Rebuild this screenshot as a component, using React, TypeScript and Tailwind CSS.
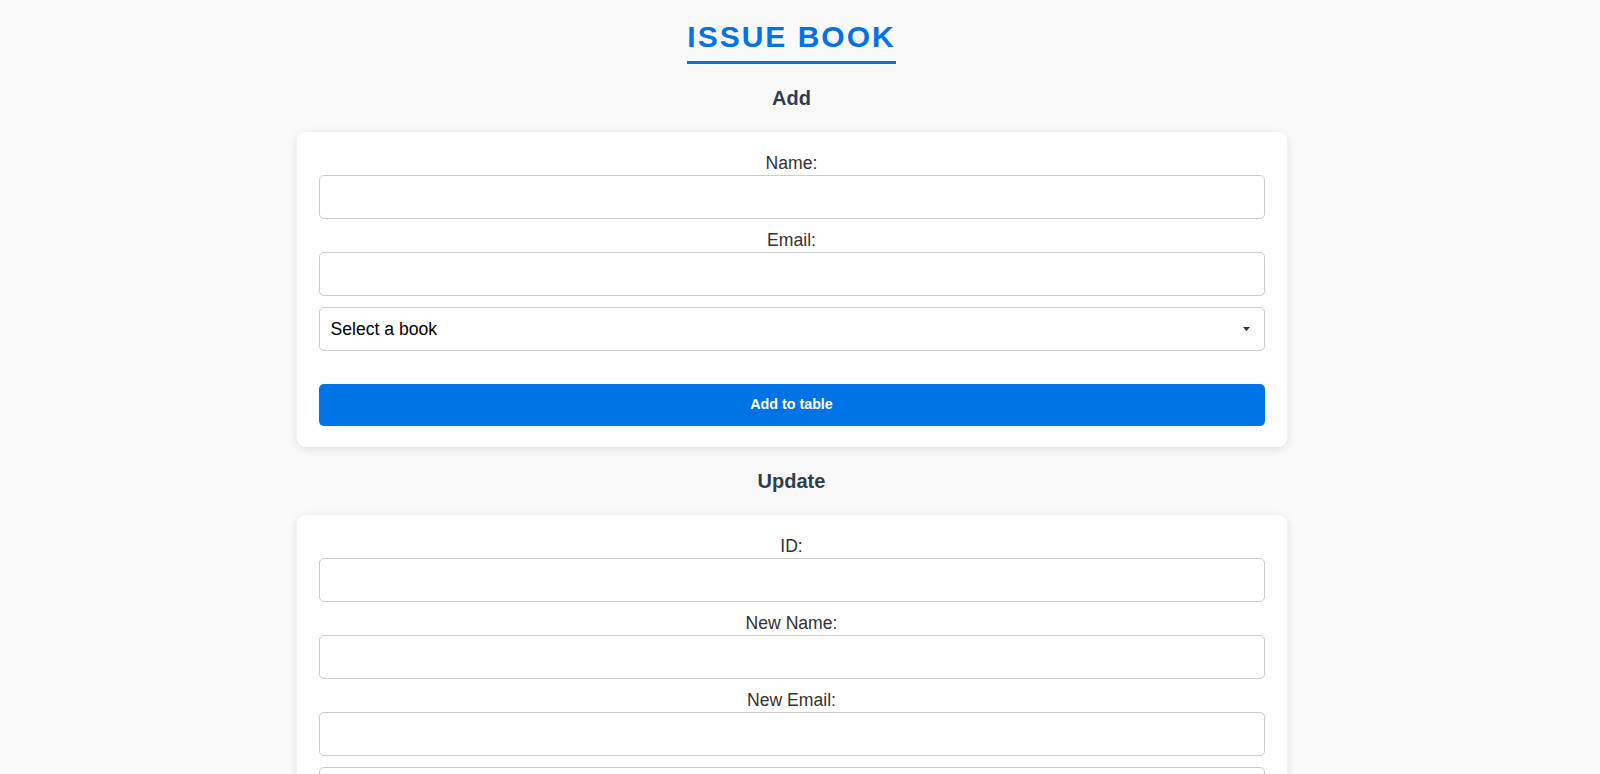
import { useState } from 'react';

const books = ['The Great Gatsby', 'To Kill a Mockingbird', '1984', 'Pride and Prejudice'];

const Field = ({ label, value, onChange }: { label: string; value: string; onChange: (v: string) => void }) => (
  <>
    <label className="block text-center text-[17.6px] leading-[20px] text-[#333] mb-[2px]">{label}</label>
    <input
      type="text"
      value={value}
      onChange={(e) => onChange(e.target.value)}
      className="block w-full h-[44px] mb-[11px] px-[11px] border border-[#ccc] rounded-[5px] bg-white text-[17.6px] outline-none focus:border-[#0073e6]"
    />
  </>
);

const BookSelect = ({ value, onChange }: { value: string; onChange: (v: string) => void }) => (
  <div className="relative mt-[1px] mb-[33px]">
    <select
      value={value}
      onChange={(e) => onChange(e.target.value)}
      className="block w-full h-[44px] pl-[11px] pr-[30px] border border-[#ccc] rounded-[5px] bg-white text-[17.6px] text-black appearance-none outline-none"
    >
      <option value="">Select a book</option>
      {books.map((b) => (
        <option key={b} value={b}>{b}</option>
      ))}
    </select>
    {/* small arrow like the native one */}
    <svg className="absolute right-[15px] top-[20px] pointer-events-none" width="7" height="4" viewBox="0 0 7 4">
      <path d="M0 0h7L3.5 4z" fill="#333" />
    </svg>
  </div>
);

const Heading = ({ children }: { children: string }) => (
  <h2 className="mt-[23px] mb-[22px] text-[20px] leading-[23px] font-bold text-[#2c3e50] text-center">{children}</h2>
);

const App = () => {
  const [name, setName] = useState('');
  const [email, setEmail] = useState('');
  const [book, setBook] = useState('');
  const [id, setId] = useState('');
  const [newName, setNewName] = useState('');
  const [newEmail, setNewEmail] = useState('');
  const [newBook, setNewBook] = useState('');
  const [delId, setDelId] = useState('');

  return (
    <div className="min-h-screen bg-[#f9f9f9] font-['Liberation_Sans',Arial,sans-serif] pr-[17px]">
      <div className="flex flex-col items-center pb-[40px]">
        <h1 className="mt-[20px] pb-[7px] border-b-[3px] border-[#0073e6] text-[30px] leading-[34px] font-bold tracking-[2px] text-[#0073e6]">
          ISSUE BOOK
        </h1>

        <Heading>Add</Heading>
        <div className="w-[990px] bg-white rounded-[9px] shadow-[0_2px_10px_rgba(0,0,0,0.1)] px-[22px] py-[21px]">
          <Field label="Name:" value={name} onChange={setName} />
          <Field label="Email:" value={email} onChange={setEmail} />
          <BookSelect value={book} onChange={setBook} />
          <button className="w-full h-[42px] bg-[#0073e6] text-white text-[14.3px] font-bold rounded-[5px] hover:bg-[#005bb5]">
            Add to table
          </button>
        </div>

        <Heading>Update</Heading>
        <div className="w-[990px] bg-white rounded-[9px] shadow-[0_2px_10px_rgba(0,0,0,0.1)] px-[22px] py-[21px]">
          <Field label="ID:" value={id} onChange={setId} />
          <Field label="New Name:" value={newName} onChange={setNewName} />
          <Field label="New Email:" value={newEmail} onChange={setNewEmail} />
          <BookSelect value={newBook} onChange={setNewBook} />
          <button className="w-full h-[42px] bg-[#0073e6] text-white text-[14.3px] font-bold rounded-[5px]">
            Update
          </button>
        </div>

        <Heading>Delete</Heading>
        <div className="w-[990px] bg-white rounded-[9px] shadow-[0_2px_10px_rgba(0,0,0,0.1)] px-[22px] py-[21px]">
          <Field label="ID:" value={delId} onChange={setDelId} />
          <button className="w-full h-[42px] mt-[21px] bg-[#0073e6] text-white text-[14.3px] font-bold rounded-[5px]">
            Delete
          </button>
        </div>

        <Heading>Issued Books</Heading>
        <div className="w-[990px] bg-white rounded-[9px] shadow-[0_2px_10px_rgba(0,0,0,0.1)] p-[22px]">
          <table className="w-full text-[16px] text-[#333] border-collapse">
            <thead>
              <tr className="bg-[#0073e6] text-white">
                <th className="p-[10px] border border-[#ddd]">ID</th>
                <th className="p-[10px] border border-[#ddd]">Name</th>
                <th className="p-[10px] border border-[#ddd]">Email</th>
                <th className="p-[10px] border border-[#ddd]">Book</th>
              </tr>
            </thead>
            <tbody>
              <tr>
                <td className="p-[10px] border border-[#ddd] text-center" colSpan={4}>No books issued yet</td>
              </tr>
            </tbody>
          </table>
        </div>
      </div>
    </div>
  );
};

export default App;
